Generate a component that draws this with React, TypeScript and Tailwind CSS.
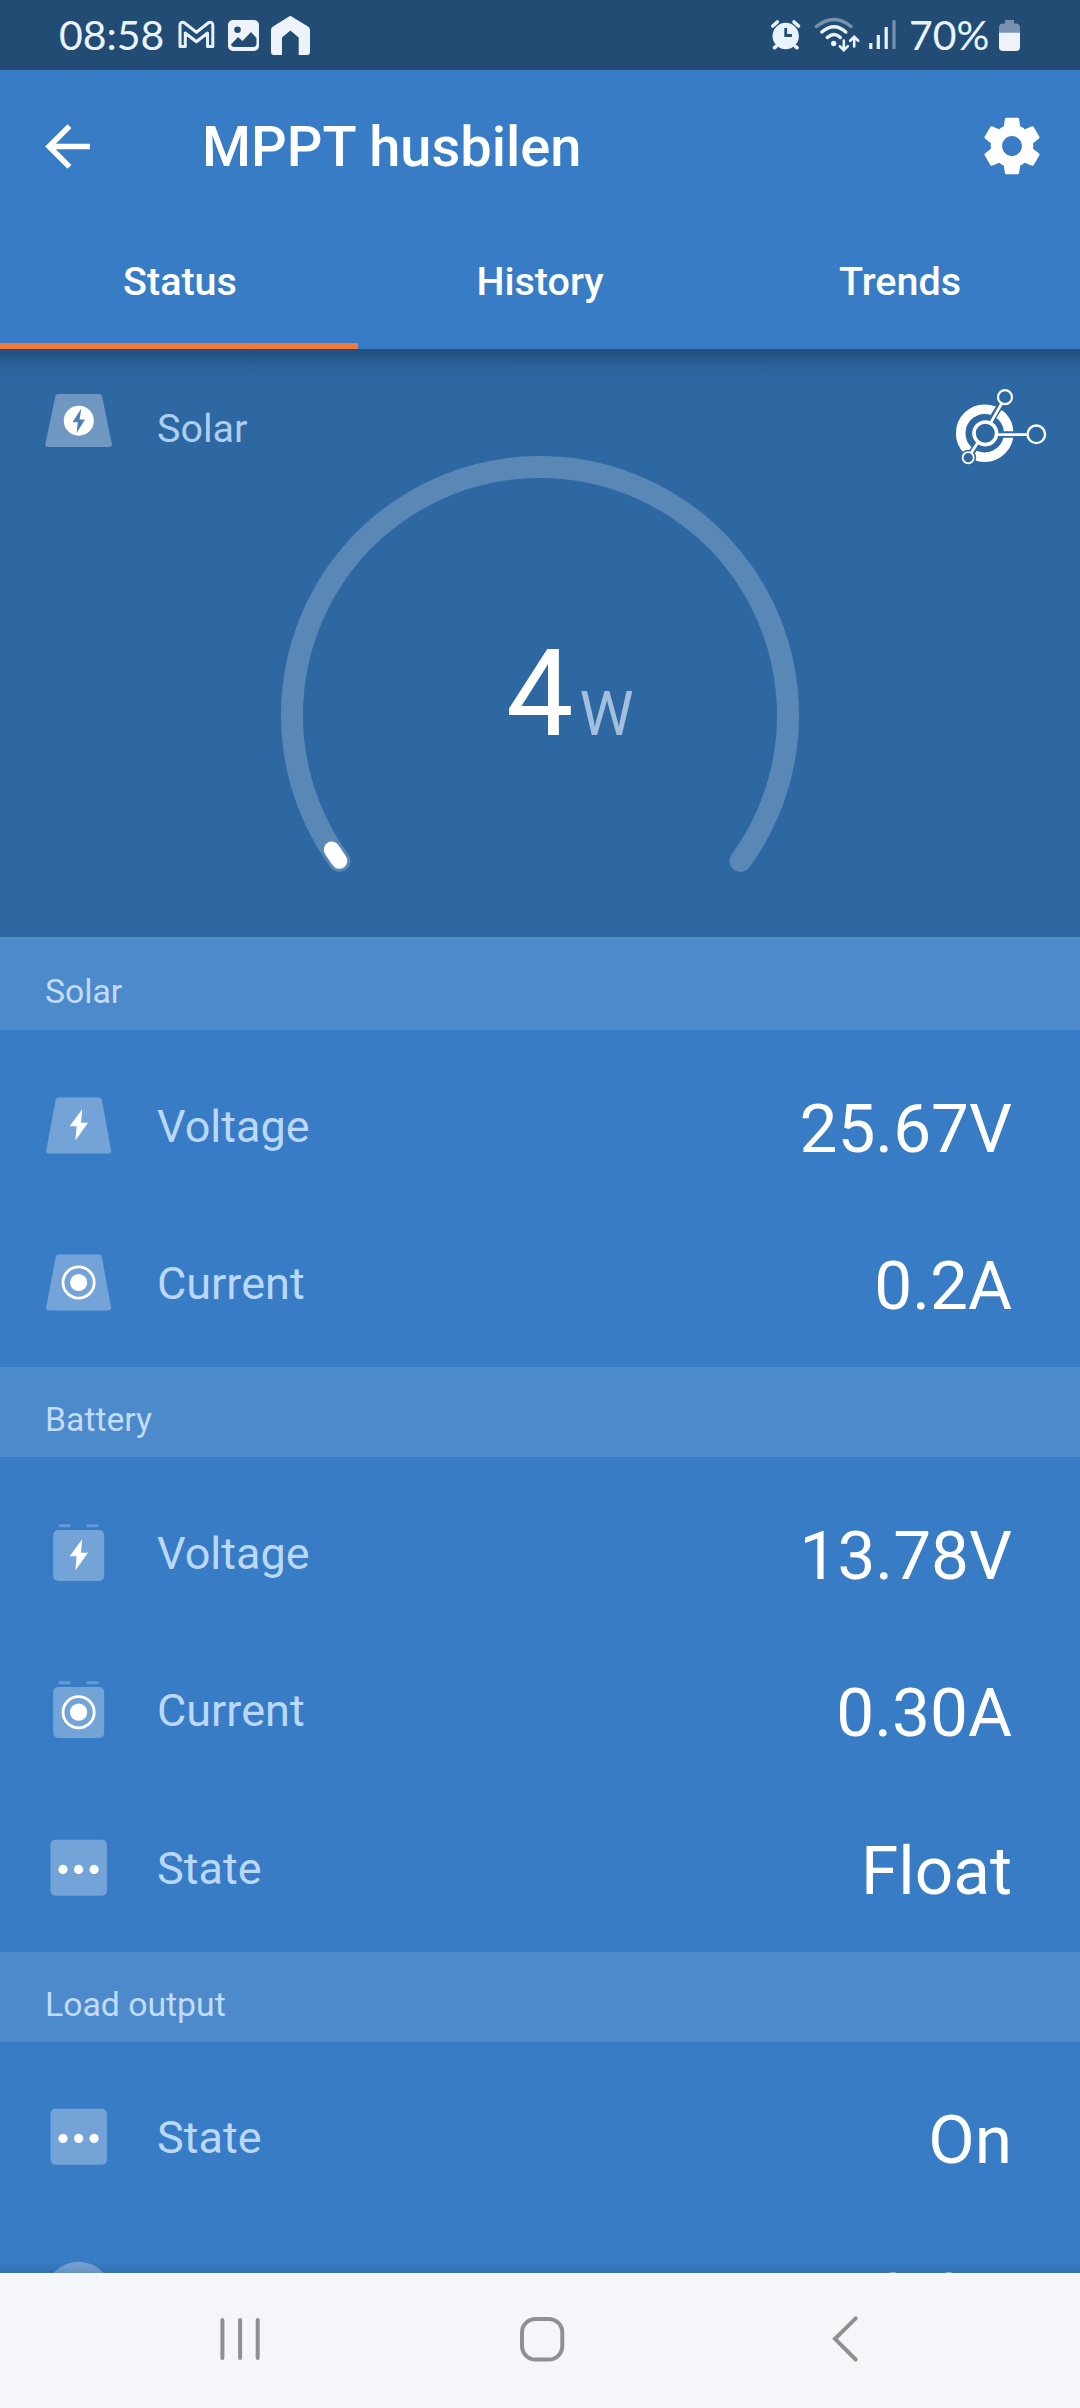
import type { ReactNode } from "react";

type IconKind = "panel-voltage" | "panel-current" | "battery-voltage" | "battery-current" | "state" | "load-current";

type Reading = { label?: string; value: string; icon: IconKind };

const solar: Reading[] = [
  { label: "Voltage", value: "25.67V", icon: "panel-voltage" },
  { label: "Current", value: "0.2A", icon: "panel-current" },
];

const battery: Reading[] = [
  { label: "Voltage", value: "13.78V", icon: "battery-voltage" },
  { label: "Current", value: "0.30A", icon: "battery-current" },
  { label: "State", value: "Float", icon: "state" },
];

const load: Reading[] = [
  { label: "State", value: "On", icon: "state" },
  { value: "0.0A", icon: "load-current" },
];

function Bolt({ dy = 0 }: { dy?: number }) {
  return <path transform={`translate(0 ${dy})`} fill="#fff" d="M38.2 18.2 25.6 35.2h7L31.4 49.6 44 31.8h-7z" />;
}

function Ring({ cy }: { cy: number }) {
  return (
    <>
      <circle cx="34.6" cy={cy} r="15.6" fill="none" stroke="#fff" strokeWidth="2.8" />
      <circle cx="34.6" cy={cy} r="8.6" fill="#fff" />
    </>
  );
}

function RowIcon({ kind }: { kind: IconKind }) {
  return (
    <svg className="block h-[70px] w-[70px] shrink-0 overflow-visible" viewBox="0 0 70 70">
      {(kind === "panel-voltage" || kind === "panel-current") && (
        <path
          fill="#73a3d7"
          d="M14.5 6.500h40.500q2.300 0 2.800 2.200l9.300 50.500q.5 3.300-2.800 3.300H5q-3.300 0-2.800-3.300l9.500-50.500q.5-2.200 2.800-2.200z"
        />
      )}
      {kind === "panel-voltage" && <Bolt />}
      {kind === "panel-current" && <Ring cy={34.5} />}
      {(kind === "battery-voltage" || kind === "battery-current") && (
        <g fill="#73a3d7">
          <rect x="9.2" y="12" width="51" height="51" rx="5" />
          <rect x="14.8" y="6.3" width="12" height="3" rx="1.2" opacity="0.8" />
          <rect x="42.6" y="6.3" width="12" height="3" rx="1.2" opacity="0.8" />
        </g>
      )}
      {kind === "battery-voltage" && <Bolt dy={3} />}
      {kind === "battery-current" && <Ring cy={37.2} />}
      {kind === "state" && (
        <>
          <rect x="6.5" y="6.8" width="56.4" height="56" rx="5" fill="#73a3d7" />
          <circle cx="19" cy="36.4" r="4.6" fill="#fff" />
          <circle cx="34.6" cy="36.4" r="4.6" fill="#fff" />
          <circle cx="50.1" cy="36.4" r="4.6" fill="#fff" />
        </>
      )}
      {kind === "load-current" && (
        <>
          <circle cx="34.6" cy="35.2" r="33.5" fill="#73a3d7" />
          <Ring cy={35.2} />
        </>
      )}
    </svg>
  );
}

function Section({ title, rows, first = false }: { title: string; rows: Reading[]; first?: boolean }) {
  return (
    <section className="shrink-0">
      <h2
        className={
          first
            ? "flex h-[93px] items-end border-t-2 border-[#588dc4] bg-[#4d8acb] pb-[18px] pl-[45px] text-[33.75px] leading-[40px] font-normal text-[#c2dcfa]"
            : "flex h-[90px] items-end bg-[#4d8acb] pb-[17px] pl-[45px] text-[33.75px] leading-[40px] font-normal text-[#c2dcfa]"
        }
      >
        {title}
      </h2>
      <div className="pt-[17px] pb-[5px]">
        {rows.map((r) => (
          <div key={r.icon} className="flex h-[157.5px] items-center pr-[68px] pl-[44px]">
            <RowIcon kind={r.icon} />
            {r.label && (
              <span className="ml-[43px] pt-[2px] text-[45px] leading-[52px] text-[#bbd8fb]">{r.label}</span>
            )}
            <span className="ml-auto pt-[6px] text-[67.5px] leading-[80px] text-white">{r.value}</span>
          </div>
        ))}
      </div>
    </section>
  );
}

function StatusBar() {
  return (
    <div className="flex h-[70px] shrink-0 items-center bg-[#234c75] font-[Lato,sans-serif] text-[41px] leading-[48px] text-[#e9f4ff]">
      <span className="ml-[59px] w-[105px]">08:58</span>
      <svg className="ml-[14px] h-[40px] w-[134px]" viewBox="178 15 134 40">
        <path
          fill="none"
          stroke="#e6f1fc"
          strokeWidth="3"
          strokeLinejoin="round"
          d="M180 25.500q0-4 4-3l12.400 9.800 12.400-9.800q4-1 4 3v21h-5.300V33l-11.100 8.800L185.300 33v13.500H180z"
        />
        <rect x="228" y="20" width="31" height="31" rx="5" fill="#eef3f9" />
        <circle cx="237.500" cy="29.700" r="3.300" fill="#234c75" />
        <path fill="#234c75" d="M231 44.500l7-7.500 4.500 4 8.500-9 5.500 6v5.500q0 3.500-3.500 3.500h-18.500q-3 0-3.500-2.500z" />
        <path
          fill="#eef3f9"
          d="M290.300 15.700 308 26.500q2 1.300 2 3.500v22q0 3-3 3h-8.300V37.500l-8.400-7-8.300 7V55H274q-3 0-3-3V30q0-2.200 2-3.500z"
        />
      </svg>
      <svg className="ml-auto h-[40px] w-[130px]" viewBox="770 15 130 40">
        <g stroke="#e9f3fd" strokeLinecap="round" fill="none">
          <circle cx="786.700" cy="36" r="13.200" fill="#e9f3fd" stroke="none" />
          <path strokeWidth="3.600" d="M773.800 26l4.500-4M799.500 26l-4.500-4M777 46.500l-1.600 1.200M796.500 46.500l1.600 1.200" />
          <path stroke="#234c75" strokeWidth="2.800" strokeLinecap="square" d="M786.700 29.500v6h4.800" />
          <path stroke="#7891ac" strokeWidth="3.400" d="M817.500 26.500q17.500-14 34.500 0" />
          <path strokeWidth="3.400" d="M822.800 32q12.500-10.500 24 0M828.300 37.500q7-6 13 0" />
          <circle cx="834.700" cy="43.500" r="2.700" fill="#e9f3fd" stroke="none" />
          <path strokeWidth="2.600" d="M844.800 40.500v9.500M840.800 46.200l4 3.900 4-3.900M855.200 46.500V37M851.200 40.800l4-3.900 4 3.900" />
          <path strokeWidth="3.200" strokeLinecap="square" d="M871.800 44.500v2.800M879.300 36.500v10.800M887.200 28.500v18.800" />
          <path stroke="#7891ac" strokeWidth="3.200" strokeLinecap="square" d="M895 21.800v25.500" />
        </g>
      </svg>
      <span className="ml-[10px] w-[82px]">70%</span>
      <svg className="mr-[57px] ml-[6px] h-[40px] w-[26px]" viewBox="998 15 26 40">
        <path fill="#7891ac" d="M1006 20h9v3.500h2q4 0 4 4V34h-21v-6.500q0-4 4-4h2z" />
        <path fill="#eef3f9" d="M1000 32.700h21V47q0 4-4 4h-13q-4 0-4-4z" />
      </svg>
    </div>
  );
}

function Tab({ children, active = false }: { children: ReactNode; active?: boolean }) {
  return (
    <div className="relative flex flex-1 items-center justify-center pb-[8px]">
      {children}
      {active && <span className="absolute bottom-0 left-0 h-[6px] w-[358px] bg-[#f27a3c]" />}
    </div>
  );
}

function Header() {
  return (
    <header className="shrink-0 bg-[#387cc6] text-white">
      <div className="flex h-[152px] items-center pr-[34px] pl-[34px]">
        <svg className="h-[67px] w-[67px]" viewBox="0 0 24 24" fill="currentColor">
          <path d="M20 11H7.830l5.590-5.590L12 4l-8 8 8 8 1.410-1.410L7.830 13H20v-2z" />
        </svg>
        <h1 className="ml-[101px] pt-[1px] text-[56px] leading-[66px] font-medium">MPPT husbilen</h1>
        <svg className="ml-auto h-[68px] w-[68px]" viewBox="0 0 24 24" fill="currentColor">
          <path d="M19.430 12.980c.04-.32.07-.64.07-.98s-.03-.66-.07-.98l2.110-1.650c.19-.15.24-.42.12-.64l-2-3.460c-.12-.22-.39-.3-.61-.22l-2.490 1c-.52-.4-1.080-.73-1.690-.98l-.38-2.650C14.460 2.180 14.250 2 14 2h-4c-.25 0-.46.18-.49.42l-.38 2.650c-.61.25-1.170.59-1.690.98l-2.490-1c-.23-.09-.49 0-.61.22l-2 3.460c-.13.22-.07.49.12.64l2.110 1.650c-.04.32-.07.65-.07.98s.03.66.07.98l-2.110 1.650c-.19.15-.24.42-.12.64l2 3.460c.12.22.39.3.61.22l2.490-1c.52.4 1.080.73 1.690.98l.38 2.650c.03.24.24.42.49.42h4c.25 0 .46-.18.49-.42l.38-2.650c.61-.25 1.170-.59 1.690-.98l2.490 1c.23.09.49 0 .61-.22l2-3.460c.12-.22.07-.49-.12-.64l-2.110-1.650zM12 15.500c-1.930 0-3.500-1.570-3.500-3.500s1.570-3.500 3.500-3.500 3.500 1.570 3.500 3.500-1.570 3.500-3.500 3.500z" />
        </svg>
      </div>
      <nav className="flex h-[127px] text-[39.5px] leading-[46px] font-medium">
        <Tab active>Status</Tab>
        <Tab>History</Tab>
        <Tab>Trends</Tab>
      </nav>
    </header>
  );
}

function ConnectLogo() {
  return (
    <svg className="h-[80px] w-[94px]" viewBox="954 387 94 80" fill="none" stroke="#fff">
      <circle cx="984.700" cy="433.200" r="24" strokeWidth="9.600" />
      <g stroke="#2d68a3" strokeWidth="6.500">
        <path d="M990 422l12-19M998 434.500h28M977.500 444l-7 10" />
        <circle cx="968.200" cy="457.700" r="6.500" strokeWidth="3" />
      </g>
      <circle cx="985.300" cy="433.300" r="11.300" strokeWidth="3.600" fill="#2d68a3" />
      <path strokeWidth="2.800" d="M990.800 422.600l10.800-19M998 434.700h28.500M977.500 443l-6 9.500" />
      <g fill="#2d68a3">
        <circle cx="1005" cy="397.200" r="7" strokeWidth="2.200" />
        <circle cx="1036.300" cy="434.300" r="8.800" strokeWidth="2.400" />
        <circle cx="968.200" cy="457.700" r="5.600" strokeWidth="1.800" />
      </g>
    </svg>
  );
}

function SolarGauge() {
  return (
    <section className="h-[588px] shrink-0 bg-[#2d68a3]">
      <div className="h-[32px] bg-linear-to-b from-[#214e7e] via-[#2b639c] via-55% to-[#2d68a3]" />
      <div className="flex h-[75px] items-start pr-[32px] pl-[44px]">
        <svg className="mt-[11px] h-[58px] w-[70px]" viewBox="0 0 70 58">
          <path fill="#7097c1" d="M14.300 2h41q2.200 0 2.800 2.200l9.700 47.500q.5 3.300-2.800 3.300H4.200q-3.300 0-2.800-3.300l10-47.500Q12 2 14.300 2z" />
          <circle cx="34.800" cy="28.700" r="15" fill="#fff" />
          <path fill="#4f7fb2" d="M37.300 16.600 28.500 30.200h5.300L32.600 41 41 27.400h-5.400z" />
        </svg>
        <span className="mt-[25px] ml-[43px] text-[39.5px] leading-[46px] text-[#aecef2]">Solar</span>
        <div className="mt-[6px] ml-auto">
          <ConnectLogo />
        </div>
      </div>
      <div className="relative flex justify-center">
        <svg className="block h-[420px] w-[520px]" viewBox="280 456 520 420" fill="none" strokeLinecap="round">
          <path d="M339.400 860.800A248 248 0 1 1 740.600 860.800" stroke="#5987b6" strokeWidth="22" />
          <path d="M339.400 860.800A248 248 0 0 1 331.800 849.600" stroke="#fff" strokeWidth="16" />
        </svg>
        <div className="absolute top-[168px] left-[506px] flex items-baseline leading-[140px]">
          <span className="text-[120px] text-white">4</span>
          <span className="ml-[6px] text-[61px] text-[#a4bfdd]">W</span>
        </div>
      </div>
    </section>
  );
}

function NavBar() {
  return (
    <footer className="flex h-[135px] shrink-0 items-center bg-[#f5f6f9] pb-[3px]">
      <svg className="ml-[216px] h-[50px] w-[48px]" viewBox="216 2314 48 50" fill="none" stroke="#909090" strokeWidth="4" strokeLinecap="round">
        <path d="M222.400 2320v38M240.100 2320v38M257.700 2320v38" />
      </svg>
      <svg className="ml-[252px] h-[50px] w-[52px]" viewBox="516 2314 52 50" fill="none" stroke="#909090" strokeWidth="4">
        <rect x="522" y="2319" width="40.300" height="40.500" rx="13.500" />
      </svg>
      <svg className="ml-[260px] h-[50px] w-[36px]" viewBox="828 2314 36 50" fill="none" stroke="#909090" strokeWidth="4" strokeLinecap="round">
        <path d="M855.700 2318.300l-20.700 20.500 20.700 20.700" />
      </svg>
    </footer>
  );
}

export default function App() {
  return (
    <div className="flex h-[2408px] w-[1080px] flex-col overflow-hidden bg-[#387cc6] font-[Roboto,sans-serif]">
      <StatusBar />
      <Header />
      <main className="flex min-h-0 flex-1 flex-col overflow-hidden">
        <SolarGauge />
        <Section title="Solar" rows={solar} first />
        <Section title="Battery" rows={battery} />
        <Section title="Load output" rows={load} />
      </main>
      <div className="z-10 -mt-[12px] h-[12px] shrink-0 bg-linear-to-b from-transparent to-black/10" />
      <NavBar />
    </div>
  );
}
